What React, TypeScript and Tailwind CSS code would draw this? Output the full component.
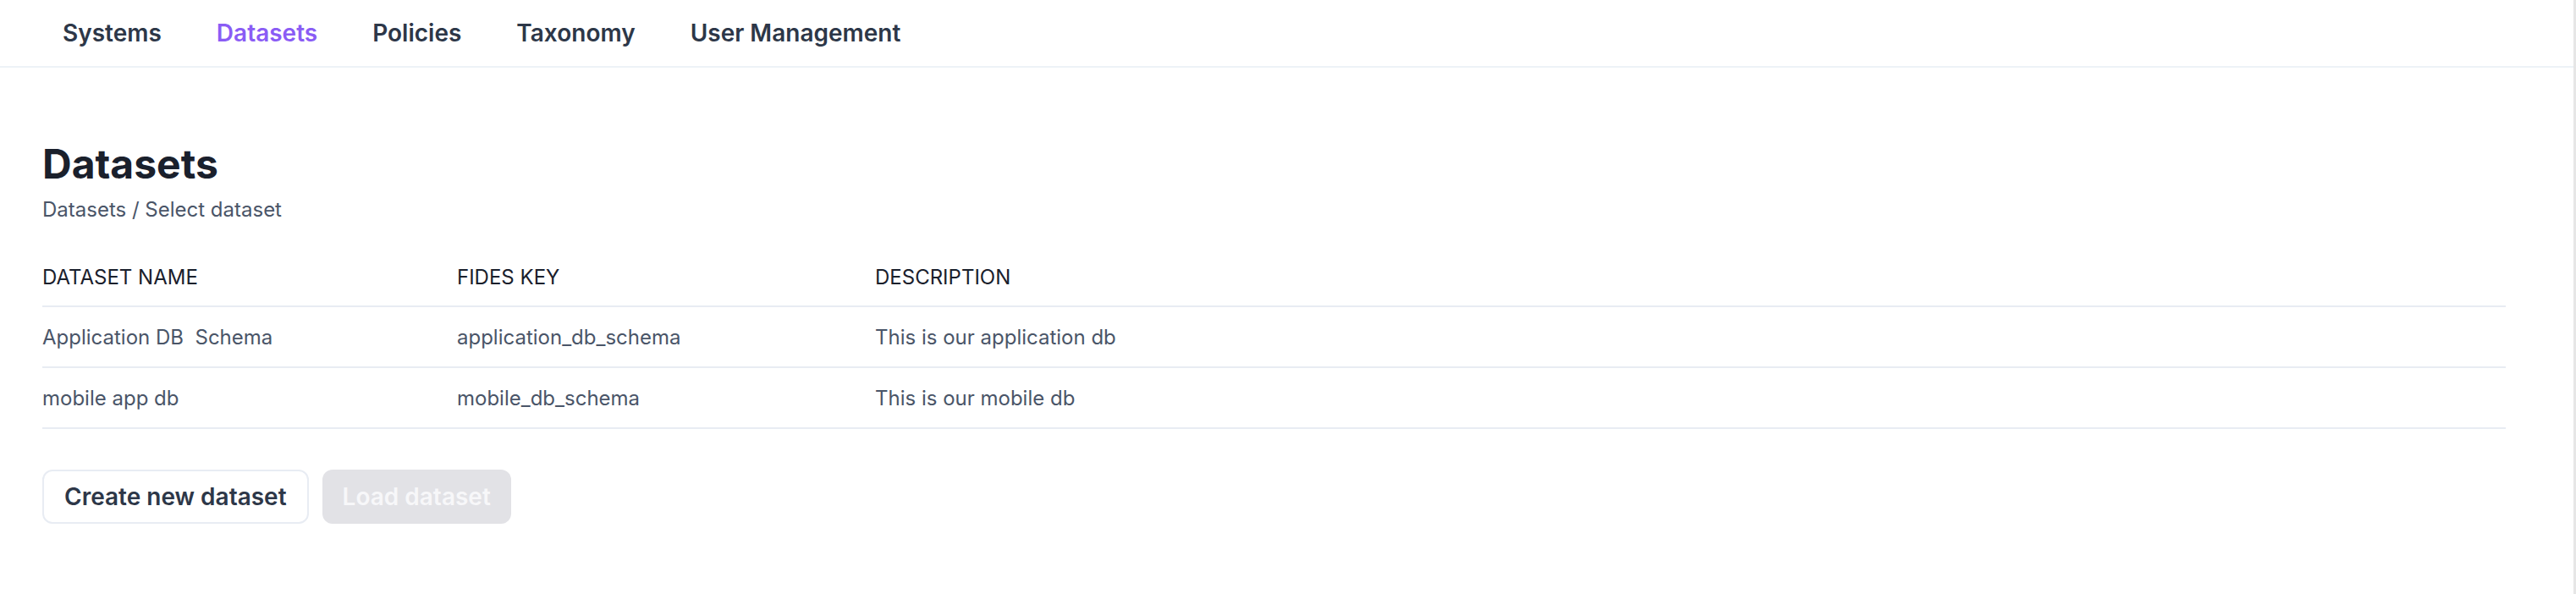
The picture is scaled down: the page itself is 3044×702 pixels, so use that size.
import React from "react";

const navItems = ["Systems", "Datasets", "Policies", "Taxonomy", "User Management"];

const rows = [
  { name: "Application DB  Schema", key: "application_db_schema", desc: "This is our application db" },
  { name: "mobile app db", key: "mobile_db_schema", desc: "This is our mobile db" },
];

export default function App() {
  return (
    <div className="flex h-[702px] w-[3044px] bg-white font-['Inter','Noto_Sans',sans-serif] antialiased">
      <div className="flex min-w-0 flex-1 flex-col">
        <header className="flex h-[80px] items-center border-b-2 border-[#edf2f7] pl-[41.5px]">
          {navItems.map((item) => (
            <button
              key={item}
              className={`px-[32.5px] text-[28px] font-semibold leading-none ${
                item === "Datasets" ? "text-[#8a5cf5]" : "text-[#2d3748]"
              }`}
            >
              {item}
            </button>
          ))}
        </header>
        <main className="flex flex-col pl-[50px] pr-[80px] pt-[82px]">
          <h1 className="text-[48px] font-bold leading-[64px] text-[#1a202c]">Datasets</h1>
          <div className="mt-[4px] text-[24px] leading-[36px] text-[#4a5568]">Datasets / Select dataset</div>
          <table className="mt-[28px] w-full border-collapse text-left">
            <thead>
              <tr className="border-b-2 border-[#e8ecf3]">
                <th className="h-[68px] w-[490px] p-0 text-[24px] font-normal text-[#1a202c]">DATASET NAME</th>
                <th className="h-[68px] w-[494px] p-0 text-[24px] font-normal text-[#1a202c]">FIDES KEY</th>
                <th className="h-[68px] p-0 text-[24px] font-normal text-[#1a202c]">DESCRIPTION</th>
              </tr>
            </thead>
            <tbody>
              {rows.map((r) => (
                <tr key={r.key} className="border-b-2 border-[#e8ecf3]">
                  <td className="h-[72px] whitespace-pre p-0 pt-[2px] text-[24px] text-[#4a5568]">{r.name}</td>
                  <td className="h-[72px] p-0 pt-[2px] text-[24px] text-[#4a5568]">{r.key}</td>
                  <td className="h-[72px] p-0 pt-[2px] text-[24px] text-[#4a5568]">{r.desc}</td>
                </tr>
              ))}
            </tbody>
          </table>
          <div className="mt-[48px] flex gap-[16px]">
            <button className="h-[64px] rounded-[12px] border-2 border-[#e8ecf3] bg-white px-[24px] text-[28px] font-semibold text-[#2d3748]">
              Create new dataset
            </button>
            <button
              disabled
              className="h-[64px] rounded-[12px] bg-[#e2e2e6] px-[24px] text-[28px] font-semibold text-[#f7f7f9]"
            >
              Load dataset
            </button>
          </div>
        </main>
      </div>
      <div className="w-[3px] bg-[#e6e6e6]" />
    </div>
  );
}
